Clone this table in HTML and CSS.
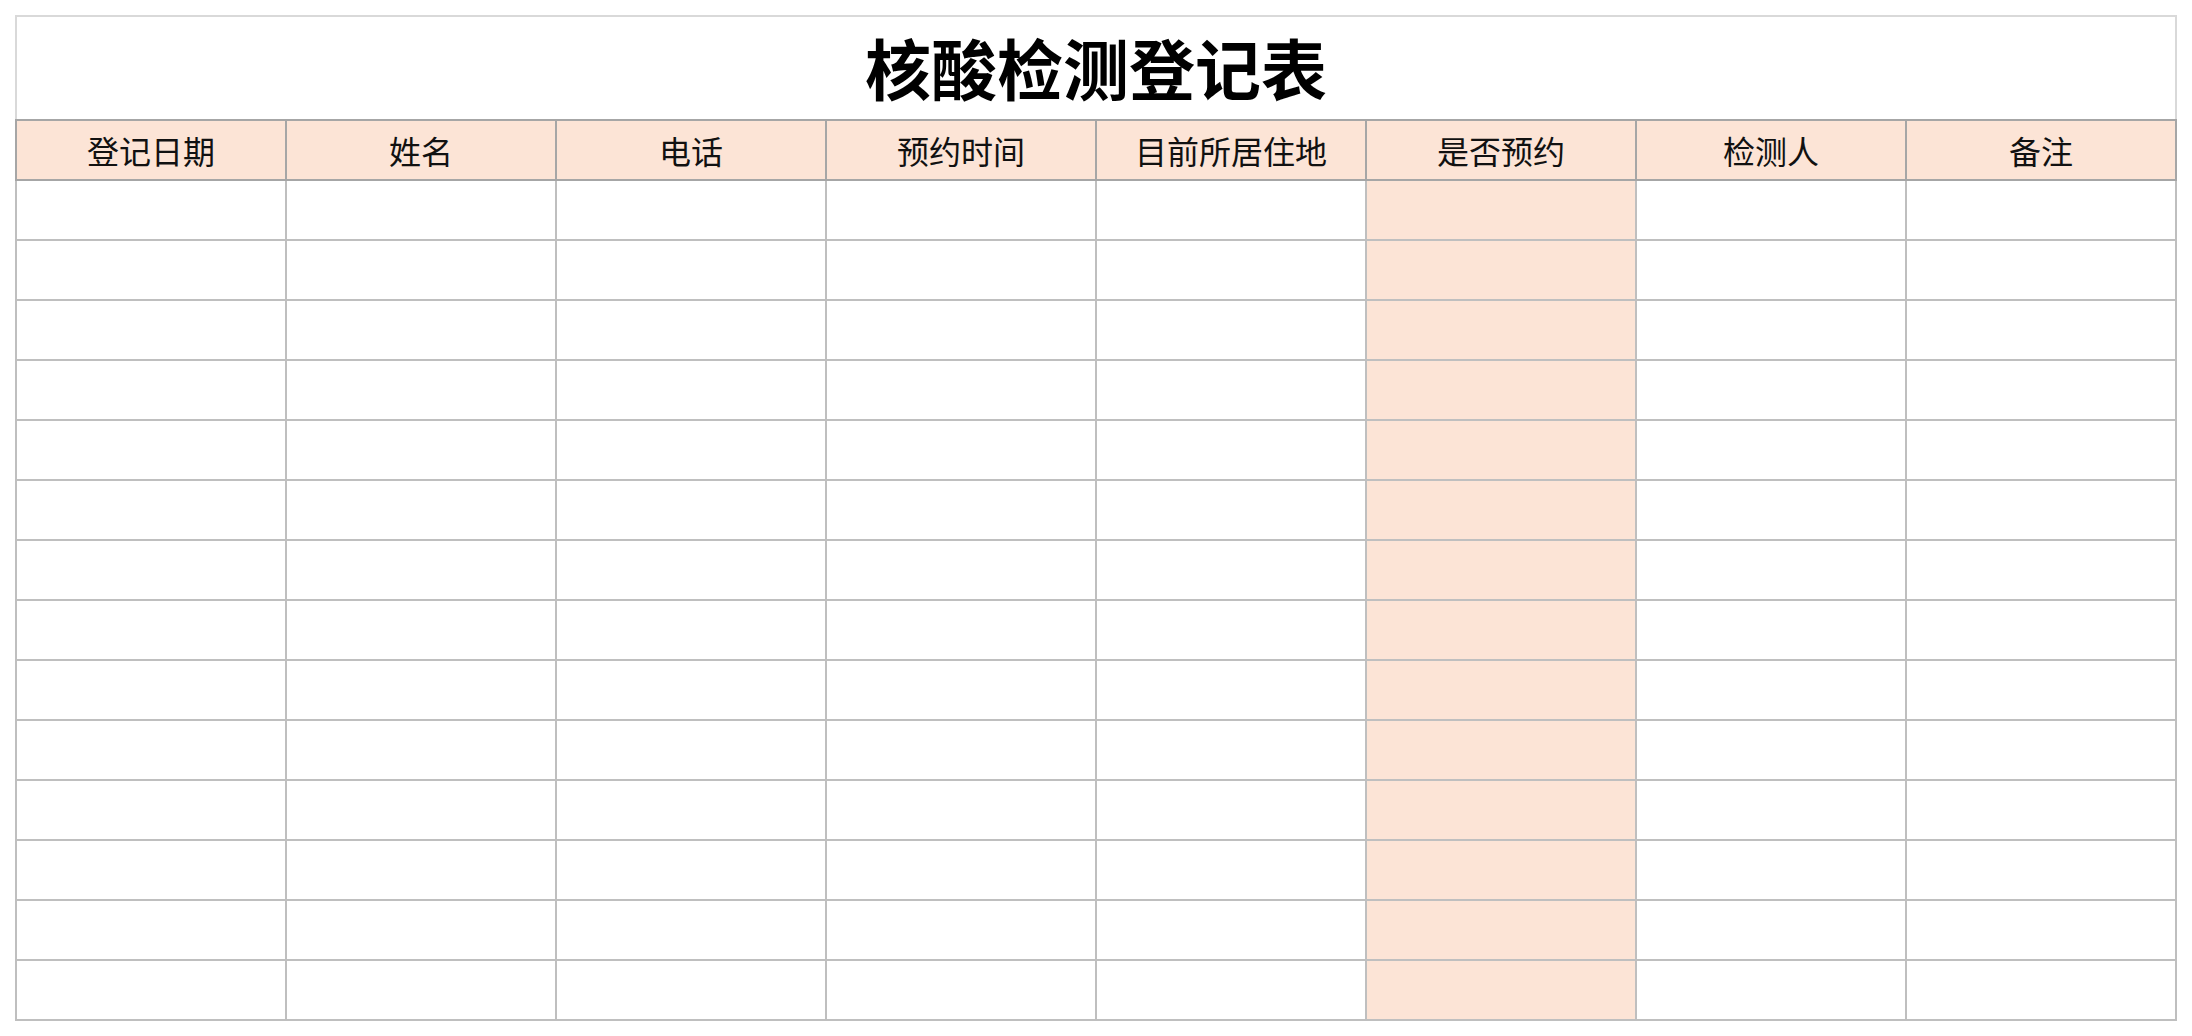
FILE: index.html
```html
<!DOCTYPE html>
<html lang="zh-CN">
<head>
  <meta charset="UTF-8">
  <title>核酸检测登记表</title>
  <link rel="stylesheet" href="styles.css">
</head>
<body>
  <div class="sheet">
    <table class="register">
      <colgroup>
        <col><col><col><col><col><col><col><col>
      </colgroup>
      <thead>
        <tr class="title-row">
          <th colspan="8" class="title">核酸检测登记表</th>
        </tr>
        <tr class="head-row">
          <th>登记日期</th>
          <th>姓名</th>
          <th>电话</th>
          <th>预约时间</th>
          <th>目前所居住地</th>
          <th>是否预约</th>
          <th>检测人</th>
          <th>备注</th>
        </tr>
      </thead>
      <tbody id="rows"></tbody>
    </table>
  </div>

  <script>
    const body = document.getElementById('rows');
    for (let r = 0; r < 14; r++) {
      let html = '<tr>';
      for (let c = 0; c < 8; c++) {
        html += c === 5 ? '<td class="mark"></td>' : '<td></td>';
      }
      html += '</tr>';
      body.innerHTML += html;
    }
  </script>
</body>
</html>
```
FILE: styles.css
```css
body {
  margin: 0;
  padding: 0;
  background: #fff;
  color: #111;
  font-family: "Noto Sans CJK SC", "Noto Sans", sans-serif;
}
.sheet {
  padding: 15px 0 0 15px;
}
.register {
  border-collapse: collapse;
  table-layout: fixed;
  width: 2162px;
}
.register col {
  width: 270px;
}
.title {
  height: 98px;
  padding: 0 0 4px;
  border: 2px solid #d9d9d9;
  border-bottom-color: #a6a6a6;
  font-size: 66px;
  font-weight: bold;
  text-align: center;
  line-height: 1;
  color: #000;
}
.head-row th {
  height: 58px;
  padding: 0;
  background: #fce4d6;
  border: 2px solid #a6a6a6;
  font-size: 32px;
  font-weight: normal;
  text-align: center;
  line-height: 1;
}
.register td {
  height: 58px;
  padding: 0;
  border: 2px solid #bfbfbf;
}
.register td.mark {
  background: #fce4d6;
}
```
